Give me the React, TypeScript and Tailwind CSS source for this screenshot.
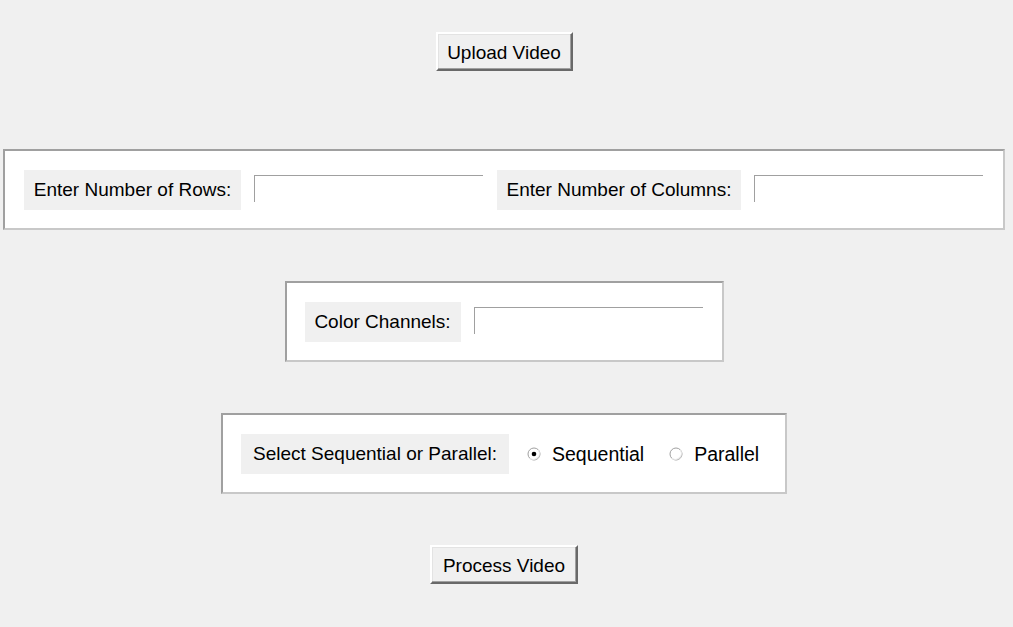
import { useState } from 'react';

function TkButton({ label, width }: { label: string; width: string }) {
  return (
    <button
      className={`${width} h-[39px] bg-[#f0f0f0] border-2 border-t-white border-l-white border-r-[#696969] border-b-[#696969] shadow-[inset_-1px_-1px_0_#a0a0a0,inset_1px_1px_0_#e3e3e3] text-[19px] text-black leading-none pt-[1px]`}
    >
      {label}
    </button>
  );
}

function Label({ text, width }: { text: string; width: string }) {
  return (
    <div className={`${width} h-[40px] bg-[#f0f0f0] flex items-center justify-center pt-[2px] text-[19px] text-black whitespace-nowrap`}>
      {text}
    </div>
  );
}

function Entry() {
  return (
    <input
      className="w-[229px] h-[27px] bg-white border-t border-l border-[#a0a0a0] border-r-0 border-b-0 outline-none px-1 text-[19px]"
    />
  );
}

function Radio({ checked, label, onClick }: { checked: boolean; label: string; onClick: () => void }) {
  return (
    <div className="flex items-center cursor-pointer" onClick={onClick}>
      <svg width="14" height="14" viewBox="0 0 14 14" className="mr-[11px]">
        <circle cx="7" cy="7" r="6" fill="white" stroke="#a0a0a0" strokeWidth="1" />
        <path d="M2.8 11.2 A6 6 0 0 0 11.2 2.8" fill="none" stroke="#e8e8e8" strokeWidth="1.2" />
        {checked && <circle cx="7" cy="7" r="2.3" fill="black" />}
      </svg>
      <span className="text-[19.5px] text-black pt-[2px]">{label}</span>
    </div>
  );
}

export default function App() {
  const [mode, setMode] = useState<'seq' | 'par'>('seq');

  return (
    <div className="w-[1013px] h-[627px] bg-[#f0f0f0] font-['Liberation_Sans',Arial,sans-serif] overflow-hidden">
      <div className="w-[1008px] flex flex-col items-center pt-[32px]">
        <TkButton label="Upload Video" width="w-[137px]" />

        <div className="mt-[78px] w-[1002px] h-[81px] bg-white border-2 border-t-[#a0a0a0] border-l-[#a0a0a0] border-r-[#c8c8c8] border-b-[#c8c8c8] flex items-center pl-[19px]">
          <Label text="Enter Number of Rows:" width="w-[217px]" />
          <div className="ml-[13px] -mt-[2px]">
            <Entry />
          </div>
          <div className="ml-[14px]">
            <Label text="Enter Number of Columns:" width="w-[244px]" />
          </div>
          <div className="ml-[13px] -mt-[2px]">
            <Entry />
          </div>
        </div>

        <div className="mt-[51px] w-[439px] h-[81px] bg-white border-2 border-t-[#a0a0a0] border-l-[#a0a0a0] border-r-[#c8c8c8] border-b-[#c8c8c8] flex items-center pl-[18px]">
          <Label text="Color Channels:" width="w-[156px]" />
          <div className="ml-[13px] -mt-[2px]">
            <Entry />
          </div>
        </div>

        <div className="mt-[51px] w-[566px] h-[81px] bg-white border-2 border-t-[#a0a0a0] border-l-[#a0a0a0] border-r-[#c8c8c8] border-b-[#c8c8c8] flex items-center pl-[18px]">
          <Label text="Select Sequential or Parallel:" width="w-[268px]" />
          <div className="ml-[18px]">
            <Radio checked={mode === 'seq'} label="Sequential" onClick={() => setMode('seq')} />
          </div>
          <div className="ml-[25px]">
            <Radio checked={mode === 'par'} label="Parallel" onClick={() => setMode('par')} />
          </div>
        </div>

        <div className="mt-[51px]">
          <TkButton label="Process Video" width="w-[148px]" />
        </div>
      </div>
    </div>
  );
}
